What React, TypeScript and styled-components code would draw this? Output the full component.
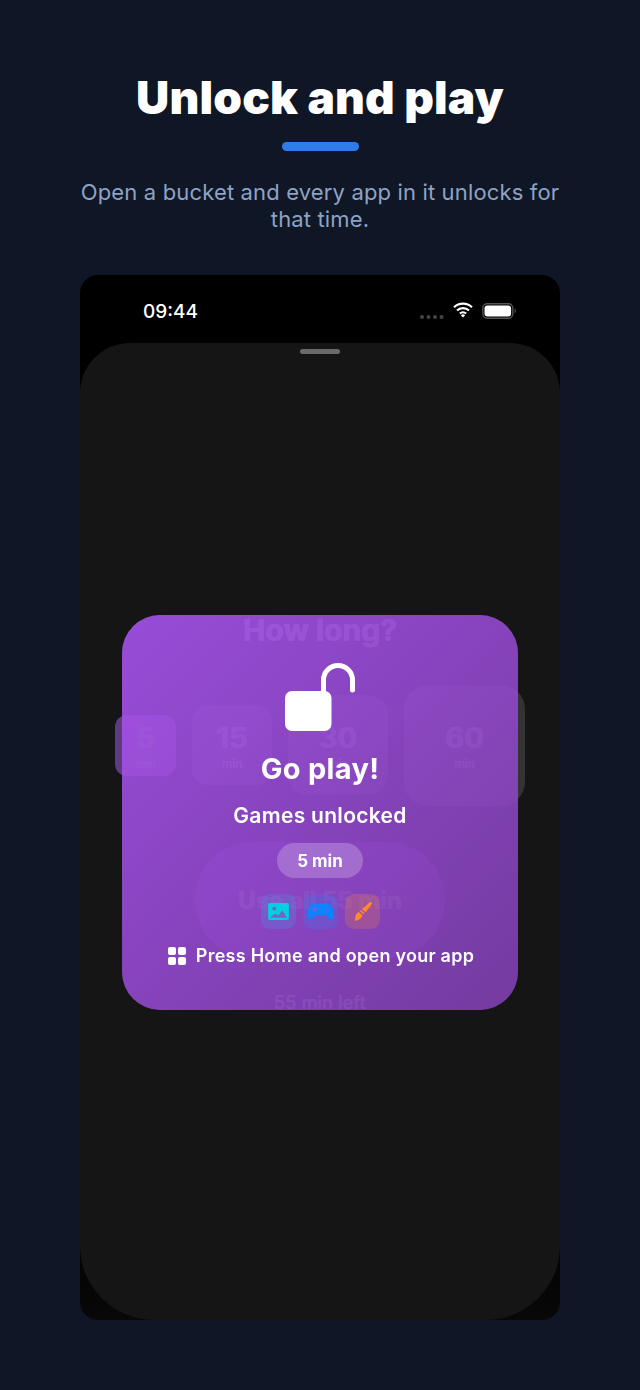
import React from "react";
import styled, { createGlobalStyle } from "styled-components";

const GlobalStyle = createGlobalStyle`
  html, body {
    margin: 0;
    padding: 0;
    background: #0f1625;
  }
  body {
    font-family: "Inter", "Roboto", sans-serif;
  }
`;

const Page = styled.div`
  width: 640px;
  height: 1390px;
  box-sizing: border-box;
  padding-top: 69px;
  display: flex;
  flex-direction: column;
  align-items: center;
  overflow: hidden;
`;

const Title = styled.h1`
  margin: 0;
  font-size: 46px;
  line-height: 56px;
  font-weight: 900;
  letter-spacing: 0.15px;
  color: #fff;
`;

const Accent = styled.div`
  width: 77px;
  height: 9px;
  margin-top: 17px;
  border-radius: 5px;
  background: #2f7bec;
`;

const Subtitle = styled.p`
  margin: 28px 0 0;
  width: 490px;
  text-align: center;
  font-size: 22px;
  line-height: 27px;
  font-weight: 400;
  letter-spacing: 0.15px;
  color: #8ea3c4;
`;

const Phone = styled.div`
  position: relative;
  width: 480px;
  height: 1045px;
  margin-top: 42px;
  border-radius: 18px;
  background: linear-gradient(#000 0 90%, #070807);
  overflow: hidden;
  display: flex;
  flex-direction: column;
`;

const StatusBar = styled.div`
  height: 68px;
  flex: none;
  box-sizing: border-box;
  padding: 25px 44px 0 63px;
  display: flex;
  justify-content: space-between;
  align-items: flex-start;
`;

const Clock = styled.span`
  font-size: 19px;
  line-height: 24px;
  font-weight: 500;
  color: #fff;
`;

const StatusIcons = styled.div`
  display: flex;
  align-items: center;
  gap: 9px;
  height: 24px;
`;

const Sheet = styled.div`
  position: relative;
  flex: 1;
  border-radius: 50px 50px 74px 74px;
  background: #151515;
  display: flex;
  flex-direction: column;
  align-items: center;
`;

const Handle = styled.div`
  width: 40px;
  height: 5px;
  margin-top: 6px;
  border-radius: 3px;
  background: #6a6a6a;
`;

const Chooser = styled.div`
  margin-top: 259px;
  display: flex;
  flex-direction: column;
  align-items: center;
`;

const ChooserTitle = styled.div`
  font-size: 30px;
  line-height: 34px;
  font-weight: 700;
  color: #fff;
`;

const Tiles = styled.div`
  margin-top: 38px;
  height: 120px;
  display: flex;
  align-items: center;
  gap: 16px;
`;

const Tile = styled.div<{ $size: number; $active?: boolean }>`
  width: ${(p) => p.$size}px;
  height: ${(p) => p.$size}px;
  border-radius: ${(p) => Math.round(p.$size * 0.2)}px;
  background: ${(p) => (p.$active ? "#5e3a80" : "#333333")};
  display: flex;
  flex-direction: column;
  align-items: center;
  justify-content: center;
  padding-top: 4px;
  box-sizing: border-box;
  color: #fff;
`;

const TileValue = styled.div`
  font-size: 29px;
  line-height: 32px;
  font-weight: 700;
`;

const TileUnit = styled.div`
  margin-top: 2px;
  font-size: 12px;
  line-height: 16px;
`;

const UseAll = styled.div`
  margin-top: 37px;
  width: 250px;
  height: 116px;
  border-radius: 58px;
  background: #3f2558;
  display: flex;
  align-items: center;
  justify-content: center;
  font-size: 24px;
  font-weight: 700;
  color: #fff;
`;

const Remaining = styled.div`
  margin-top: 33px;
  font-size: 18px;
  line-height: 24px;
  letter-spacing: 0.2px;
  color: #fff;
`;

const Modal = styled.div`
  position: absolute;
  left: 42px;
  top: 340px;
  width: 396px;
  height: 395px;
  box-sizing: border-box;
  padding-top: 48px;
  border-radius: 38px;
  background: linear-gradient(135deg, rgba(158, 78, 226, 0.95), rgba(120, 60, 166, 0.95));
  backdrop-filter: brightness(2.4);
  display: flex;
  flex-direction: column;
  align-items: center;
  color: #fff;
`;

const GoPlay = styled.div`
  margin-top: 20px;
  font-size: 29px;
  line-height: 36px;
  font-weight: 700;
  letter-spacing: 0.3px;
`;

const Unlocked = styled.div`
  margin-top: 16px;
  font-size: 21px;
  line-height: 26px;
  font-weight: 600;
  letter-spacing: 0.3px;
`;

const DurationPill = styled.div`
  margin-top: 14px;
  height: 35px;
  width: 86px;
  border-radius: 18px;
  background: rgba(255, 255, 255, 0.22);
  display: flex;
  align-items: center;
  justify-content: center;
  font-size: 17px;
  font-weight: 700;
`;

const AppIcons = styled.div`
  margin-top: 16px;
  display: flex;
  gap: 7px;
`;

const AppIcon = styled.div<{ $bg: string; $fg: string }>`
  width: 35px;
  height: 35px;
  border-radius: 9px;
  background: ${(p) => p.$bg};
  color: ${(p) => p.$fg};
  display: flex;
  align-items: center;
  justify-content: center;
`;

const HomeHint = styled.div`
  margin-top: 14px;
  padding-left: 2px;
  display: flex;
  align-items: center;
  gap: 10px;
  font-size: 18px;
  line-height: 26px;
  font-weight: 600;
  letter-spacing: 0.25px;
`;

const SignalDots = () => (
  <svg width="24" height="14" viewBox="0 0 24 14">
    {[2, 8.5, 15, 21.5].map((x) => (
      <circle key={x} cx={x} cy="12" r="2" fill="#444" />
    ))}
  </svg>
);

const Wifi = () => (
  <svg width="20" height="16" viewBox="0 0 20 16" style={{ marginBottom: 4 }}>
    <path d="M1 5.2a13 13 0 0 1 18 0M4 8.6a8.6 8.6 0 0 1 12 0M6.9 11.6a4.4 4.4 0 0 1 6.2 0" fill="none" stroke="#fff" strokeWidth="2.1" />
    <path d="M10 15.6l-2.1-2.2a3 3 0 0 1 4.2 0z" fill="#fff" />
  </svg>
);

const Battery = () => (
  <svg width="34" height="16" viewBox="0 0 34 16" style={{ marginBottom: 2 }}>
    <rect x="0.8" y="0.8" width="30" height="14.4" rx="4.4" fill="none" stroke="#555" strokeWidth="1.4" />
    <rect x="2.5" y="2.5" width="26.6" height="11" rx="3" fill="#fff" />
    <path d="M32.6 5.6c.9.3 1.2 1.3 1.2 2.4s-.3 2.1-1.2 2.4z" fill="#555" />
  </svg>
);

const OpenLock = () => (
  <svg width="72" height="68" viewBox="0 0 72 68">
    <path d="M39.5 29V17a14.5 14.5 0 0 1 29 0V27" fill="none" stroke="#fff" strokeWidth="5" strokeLinecap="round" />
    <rect x="1" y="28" width="46.5" height="40" rx="7" fill="#fff" />
  </svg>
);

const HomeGrid = () => (
  <svg width="18" height="18" viewBox="0 0 18 18" fill="#fff">
    <rect x="0" y="0" width="8" height="8" rx="2" />
    <rect x="10" y="0" width="8" height="8" rx="2" />
    <rect x="0" y="10" width="8" height="8" rx="2" />
    <rect x="10" y="10" width="8" height="8" rx="2" />
  </svg>
);

const PhotoGlyph = () => (
  <svg width="21" height="17" viewBox="0 0 22 18">
    <rect x="0" y="0" width="22" height="18" rx="2" fill="currentColor" />
    <circle cx="6.5" cy="6" r="2" fill="#7563c6" />
    <path d="M2 15.5l5.5-4.5 3 2.5 4.5-5.5 5 7.5z" fill="#7563c6" />
  </svg>
);

const PadGlyph = () => (
  <svg width="27" height="17" viewBox="0 0 28 18">
    <path
      fill="currentColor"
      d="M7 1h14c3 0 5 2 6 5.5l1 6c.4 2.8-1 4.5-3 4.5-1.6 0-2.6-1-3.6-2.4-.8-1.1-1.4-1.6-2.9-1.6H9.5c-1.5 0-2.1.5-2.9 1.6C5.6 16 4.6 17 3 17c-2 0-3.4-1.7-3-4.5l1-6C2 3 4 1 7 1z"
    />
    <path fill="#7a5fd0" d="M7.2 4h1.6v2h2v1.6h-2v2H7.2v-2h-2V6h2z" />
    <circle cx="19" cy="5" r="1.1" fill="#7a5fd0" />
    <circle cx="21.6" cy="7.6" r="1.1" fill="#7a5fd0" />
  </svg>
);

const BrushGlyph = () => (
  <svg width="21" height="21" viewBox="0 0 24 24" fill="currentColor">
    <path d="M22.5 1.5c.6.5.4 1.5-.2 2.4l-6.8 9-4.2-3.6 8.4-7.3c.9-.8 2.1-1 2.8-.5z" />
    <path d="M10.3 10.3l3.9 3.4-1.2 1.5-4-3.5z" />
    <path d="M7.8 12.7l3.9 3.5c-.4 3.4-3.4 6.2-9.4 6.3 2-1.5 1-3.2 1.8-5.6.6-1.9 2-3.4 3.7-4.2z" />
  </svg>
);

export default function App() {
  return (
    <Page>
      <GlobalStyle />
      <Title>Unlock and play</Title>
      <Accent />
      <Subtitle>Open a bucket and every app in it unlocks for that time.</Subtitle>
      <Phone>
        <StatusBar>
          <Clock>09:44</Clock>
          <StatusIcons>
            <SignalDots />
            <Wifi />
            <Battery />
          </StatusIcons>
        </StatusBar>
        <Sheet>
          <Handle />
          <Chooser>
            <ChooserTitle>How long?</ChooserTitle>
            <Tiles>
              <Tile $size={61} $active>
                <TileValue>5</TileValue>
                <TileUnit>min</TileUnit>
              </Tile>
              <Tile $size={80}>
                <TileValue>15</TileValue>
                <TileUnit>min</TileUnit>
              </Tile>
              <Tile $size={100}>
                <TileValue>30</TileValue>
                <TileUnit>min</TileUnit>
              </Tile>
              <Tile $size={121}>
                <TileValue>60</TileValue>
                <TileUnit>min</TileUnit>
              </Tile>
            </Tiles>
            <UseAll>Use all 55 min</UseAll>
            <Remaining>55 min left</Remaining>
          </Chooser>
        </Sheet>
        <Modal>
          <OpenLock />
          <GoPlay>Go play!</GoPlay>
          <Unlocked>Games unlocked</Unlocked>
          <DurationPill>5 min</DurationPill>
          <AppIcons>
            <AppIcon $bg="rgba(90, 130, 220, 0.35)" $fg="#00d0e0">
              <PhotoGlyph />
            </AppIcon>
            <AppIcon $bg="rgba(70, 110, 230, 0.35)" $fg="#0a84ff">
              <PadGlyph />
            </AppIcon>
            <AppIcon $bg="rgba(240, 130, 60, 0.25)" $fg="#ff8a2a">
              <BrushGlyph />
            </AppIcon>
          </AppIcons>
          <HomeHint>
            <HomeGrid />
            Press Home and open your app
          </HomeHint>
        </Modal>
      </Phone>
    </Page>
  );
}
